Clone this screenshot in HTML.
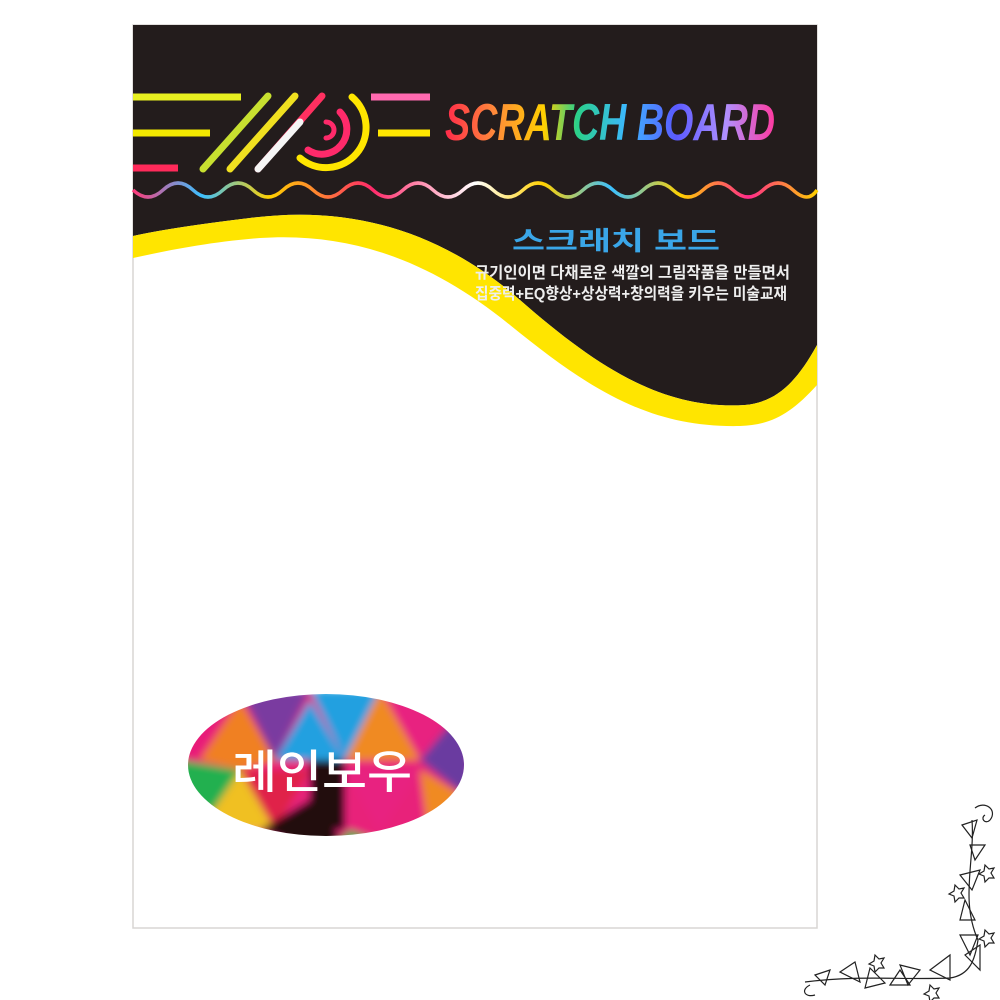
<!DOCTYPE html>
<html><head><meta charset="utf-8"><style>
html,body{margin:0;padding:0;background:#fff;width:1000px;height:1000px;overflow:hidden}
svg{display:block}
</style></head><body>
<svg width="1000" height="1000" viewBox="0 0 1000 1000" xmlns="http://www.w3.org/2000/svg">
<defs>
<linearGradient id="rb" x1="0" x2="1">
<stop offset="0" stop-color="#ff2a6a"/><stop offset="0.15" stop-color="#ffe600"/><stop offset="0.3" stop-color="#ff2a6a"/><stop offset="0.45" stop-color="#ffe600"/><stop offset="0.6" stop-color="#3cc0ff"/><stop offset="0.75" stop-color="#ff2a8a"/><stop offset="0.9" stop-color="#ffe600"/><stop offset="1" stop-color="#ff7ab0"/>
</linearGradient>
<linearGradient id="wv" x1="0" x2="1">
<stop offset="0" stop-color="#ff3a7a"/><stop offset="0.1" stop-color="#3cc0ff"/><stop offset="0.2" stop-color="#ffd000"/><stop offset="0.35" stop-color="#ff2a6a"/><stop offset="0.5" stop-color="#ffffff"/><stop offset="0.6" stop-color="#ffd000"/><stop offset="0.7" stop-color="#3cc0ff"/><stop offset="0.8" stop-color="#ffd000"/><stop offset="0.9" stop-color="#ff2a8a"/><stop offset="1" stop-color="#ffd000"/>
</linearGradient>
<linearGradient id="tt" x1="0" x2="1">
<stop offset="0" stop-color="#ff2a4a"/><stop offset="0.15" stop-color="#ff8a3a"/><stop offset="0.3" stop-color="#ffd000"/><stop offset="0.4" stop-color="#2ad08a"/><stop offset="0.55" stop-color="#3cb8ff"/><stop offset="0.7" stop-color="#5a5aff"/><stop offset="0.85" stop-color="#b090ff"/><stop offset="1" stop-color="#ff3aa0"/>
</linearGradient>
<clipPath id="ov"><ellipse cx="326" cy="765" rx="138" ry="71"/></clipPath>
<filter id="bl"><feGaussianBlur stdDeviation="4"/></filter>
</defs>
<rect x="133" y="25" width="684" height="903" fill="#fff" stroke="#d8d6d4" stroke-width="1.5"/>
<path d="M133 25 H817 V345 C795 385 775 402 745 405 C665 410 600 370 520 300 C440 230 350 205 250 218 C200 224 160 230 133 236 Z" fill="#231c1c"/>
<path d="M133 236 C160 230 200 224 250 218 C350 205 440 230 520 300 C600 370 665 410 745 405 C775 402 795 385 817 345 V385 C790 415 770 425 740 426 C650 428 590 390 510 325 C430 260 350 232 260 238 C210 242 170 250 133 258 Z" fill="#ffe500"/>
<g stroke-linecap="butt" stroke-width="7">
<line x1="133" y1="97" x2="241" y2="97" stroke="#e8f020"/>
<line x1="133" y1="133" x2="210" y2="133" stroke="#f2e800"/>
<line x1="133" y1="168" x2="178" y2="168" stroke="#ff2a5a"/>
<line x1="371" y1="97" x2="430" y2="97" stroke="#ff6ab0"/>
<line x1="378" y1="133" x2="430" y2="133" stroke="#ffe600"/>
<line x1="363" y1="168" x2="817" y2="168" stroke="url(#rb)"/>
</g>
<g stroke-linecap="round" stroke-width="7" fill="none">
<line x1="268" y1="96" x2="203" y2="169" stroke="#c8e030"/>
<line x1="295" y1="96" x2="230" y2="169" stroke="#f0e020"/>
<line x1="322" y1="96" x2="258" y2="169" stroke="#ff3060"/>
<line x1="300" y1="122" x2="258" y2="169" stroke="#f5f5f5"/>
<path d="M352 97 A38 38 0 0 1 300 158" stroke="#ffe600"/>
<path d="M340 112 A25 25 0 0 1 308 150" stroke="#ff2a6a"/>
<path d="M326 122 A8 8 0 0 1 326 138" stroke="#ff2a6a" stroke-width="5"/>
</g>
<path d="M133 190 q15 14 30 0 t30 0 t30 0 t30 0 t30 0 t30 0 t30 0 t30 0 t30 0 t30 0 t30 0 t30 0 t30 0 t30 0 t30 0 t30 0 t30 0 t30 0 t30 0 t30 0 t30 0 t30 0 t24 0" fill="none" stroke="url(#wv)" stroke-width="3.5"/>
<text x="445" y="140" font-family="Liberation Sans, sans-serif" font-size="52" fill="url(#tt)" textLength="330" lengthAdjust="spacingAndGlyphs" font-style="italic" font-weight="bold">SCRATCH BOARD</text>
<text x="512" y="250" font-family="'Liberation Sans','Noto Sans CJK KR',sans-serif" font-size="26" font-weight="bold" fill="#3aa6e8" textLength="208" lengthAdjust="spacingAndGlyphs">스크래치 보드</text>
<text x="475" y="278" font-family="'Liberation Sans','Noto Sans CJK KR',sans-serif" font-size="16" font-weight="bold" fill="#eee" textLength="315" lengthAdjust="spacingAndGlyphs">규기인이면 다채로운 색깔의 그림작품을 만들면서</text>
<text x="475" y="299" font-family="'Liberation Sans','Noto Sans CJK KR',sans-serif" font-size="16" font-weight="bold" fill="#eee" textLength="312" lengthAdjust="spacingAndGlyphs">집중력+EQ향상+상상력+창의력을 키우는 미술교재</text>
<g clip-path="url(#ov)">
<g filter="url(#bl)">
<rect x="180" y="690" width="300" height="160" fill="#e8207a"/>
<polygon points="180,690 240,690 240,760 180,760" fill="#e81a78"/>
<polygon points="240,690 310,690 275,760" fill="#7a3aa0"/>
<polygon points="240,700 275,760 240,770 200,760" fill="#f08020"/>
<polygon points="310,690 380,690 345,760" fill="#20a0e0"/>
<polygon points="275,760 345,760 310,700" fill="#20a0e0"/>
<polygon points="345,760 380,690 420,760" fill="#f08a20"/>
<polygon points="380,690 470,690 420,760" fill="#e82080"/>
<polygon points="420,760 470,700 470,800" fill="#6a3aa0"/>
<polygon points="180,760 240,770 200,830 180,830" fill="#20b050"/>
<polygon points="200,830 240,770 275,830" fill="#f0c020"/>
<polygon points="240,770 310,770 275,830" fill="#e0204a"/>
<polygon points="310,760 345,760 345,830 310,830" fill="#201010"/>
<polygon points="345,770 420,770 380,830" fill="#e82080"/>
<polygon points="420,770 470,800 470,850 430,850" fill="#f08a20"/>
<polygon points="260,830 310,850 350,850 310,800" fill="#201010"/>
<polygon points="350,830 400,850 330,850" fill="#20b050"/>
</g>
</g>
<text x="232" y="788" font-family="'Noto Sans CJK KR',sans-serif" font-size="46" font-weight="500" fill="#fff" textLength="180" lengthAdjust="spacingAndGlyphs">레인보우</text>
<g fill="none" stroke="#222" stroke-width="1.2">
<path d="M975 808 C985 800 998 810 990 820 C985 825 980 818 985 815"/>
<path d="M972 820 C975 860 960 900 978 940 C975 960 970 975 950 978 C900 980 860 975 805 982"/>
<path d="M962 825 l15 -5 -5 18 z M970 845 l15 0 -10 15 z M960 875 l20 -5 -8 20 z M965 900 l10 20 -15 0 z M960 935 l18 0 -8 20 z M965 955 l15 -10 0 25 z"/>
<path d="M930 970 l20 -15 0 25 z M900 965 l20 5 -12 15 z M870 968 l-5 20 20 -5 z M840 972 l15 -10 5 20 z M815 975 l15 -5 -5 15 z M890 985 l10 -15 10 15 z"/>
<path d="M985 865 l4 4 5 -1 -3 5 3 5 -5 0 -4 4 -1 -6 -5 -2 5 -3 z M955 885 l4 4 5 -1 -3 5 3 5 -5 0 -4 4 -1 -6 -5 -2 5 -3 z M985 930 l4 4 5 -1 -3 5 3 5 -5 0 -4 4 -1 -6 -5 -2 5 -3 z M875 955 l4 4 5 -1 -3 5 3 5 -5 0 -4 4 -1 -6 -5 -2 5 -3 z M930 985 l4 4 5 -1 -3 5 3 5 -5 0 -4 4 -1 -6 -5 -2 5 -3 z"/>
<path d="M810 985 C800 990 805 998 815 995"/>
</g>
</svg>
</body></html>
